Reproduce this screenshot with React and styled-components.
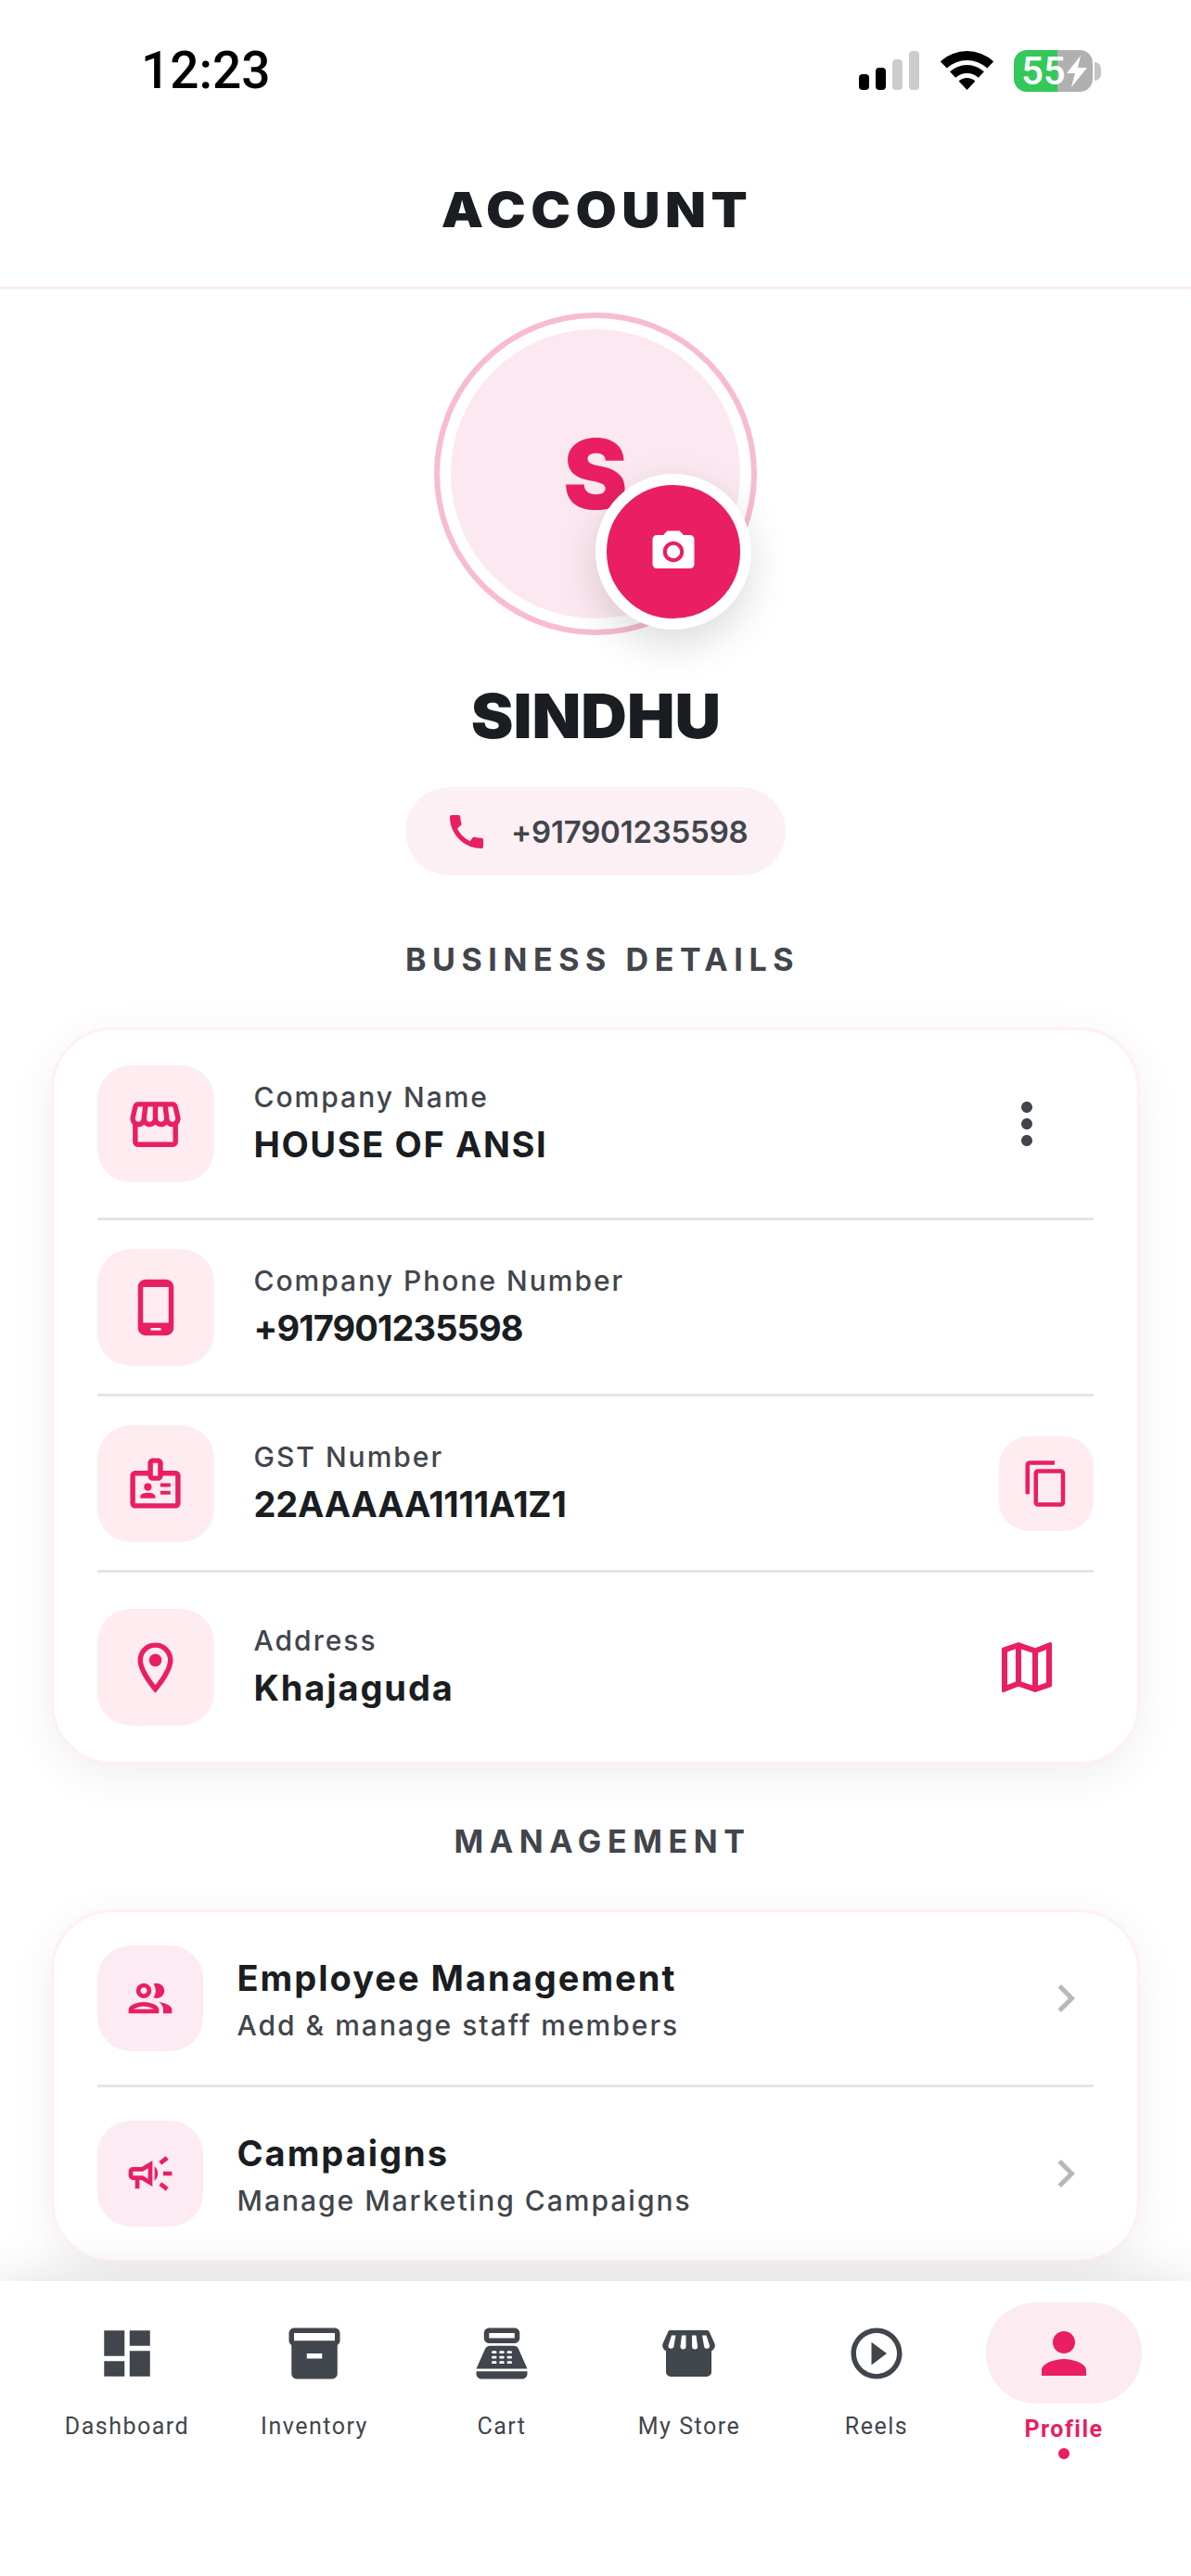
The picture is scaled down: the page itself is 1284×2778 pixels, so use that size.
import React from 'react';
import styled, { createGlobalStyle } from 'styled-components';
import {
    MdCall,
    MdCameraAlt,
    MdChevronRight,
    MdContentCopy,
    MdDashboard,
    MdInventory2,
    MdMoreVert,
    MdOutlineBadge,
    MdOutlineCampaign,
    MdOutlineGroup,
    MdOutlineLocationOn,
    MdOutlineMap,
    MdOutlinePhoneAndroid,
    MdOutlineStorefront,
    MdPerson,
    MdPlayCircleOutline,
    MdPointOfSale,
} from 'react-icons/md';

const PINK = '#e91e63';
const DARK = '#1a1d21';
const GREY = '#41454c';
const HEADING_FONT = 'Inter, "Noto Sans", sans-serif';

const GlobalStyle = createGlobalStyle`
    * {
        box-sizing: border-box;
    }

    body {
        margin: 0;
        background: #fff;
        font-family: ${HEADING_FONT};
    }
`;

const Screen = styled.div`
    width: 1284px;
    height: 2778px;
    display: flex;
    flex-direction: column;
    overflow: hidden;
    background: #fff;
`;

const StatusBar = styled.div`
    height: 152px;
    flex-shrink: 0;
    display: flex;
    align-items: center;
    justify-content: space-between;
    padding: 0 106px 0 152px;
`;

const Time = styled.span`
    font-family: Roboto, sans-serif;
    font-size: 55px;
    font-weight: 500;
    color: #000;
`;

const StatusIcons = styled.div`
    display: flex;
    align-items: center;
    gap: 22px;
`;

const Battery = styled.div`
    display: flex;
    align-items: center;
    position: relative;
    width: 85px;
    height: 45px;
    padding-left: 8px;
    border-radius: 14px;
    background: linear-gradient(90deg, #34c759 55%, #b0b0b0 55%);
    font-family: Roboto, sans-serif;
    font-size: 42px;
    font-weight: 500;
    color: #fff;

    &::after {
        content: '';
        position: absolute;
        right: -9px;
        top: 13px;
        width: 7px;
        height: 20px;
        border-radius: 0 7px 7px 0;
        background: #c4c4c4;
    }

    svg {
        position: absolute;
        right: 4px;
        top: 6px;
    }
`;

const Header = styled.header`
    height: 160px;
    flex-shrink: 0;
    display: flex;
    align-items: center;
    justify-content: center;
    padding-bottom: 8px;
    border-bottom: 3px solid #fdeaf1;
`;

const Title = styled.h1`
    margin: 0 0 0 4px;
    font-size: 52px;
    font-weight: 900;
    letter-spacing: 5px;
    color: ${DARK};
    transform: scaleX(1.1);
`;

const Main = styled.main`
    flex: 1;
    min-height: 0;
    display: flex;
    flex-direction: column;
    align-items: center;
    padding-top: 25px;
`;

const AvatarRing = styled.div`
    position: relative;
    width: 348px;
    height: 348px;
    flex-shrink: 0;
    padding: 12px;
    border: 6px solid #f8bbd0;
    border-radius: 50%;
`;

const AvatarFill = styled.div`
    width: 100%;
    height: 100%;
    display: flex;
    align-items: center;
    justify-content: center;
    border-radius: 50%;
    background: #fce8f0;
    font-size: 104px;
    font-weight: 900;
    color: ${PINK};
`;

const CameraBadge = styled.div`
    position: absolute;
    right: 0;
    bottom: 0;
    width: 168px;
    height: 168px;
    display: flex;
    align-items: center;
    justify-content: center;
    border: 12px solid #fff;
    border-radius: 50%;
    background: ${PINK};
    color: #fff;
    box-shadow: 0 16px 44px rgba(0, 0, 0, 0.14);
`;

const Name = styled.h2`
    margin: 47px 0 0;
    font-size: 66px;
    line-height: 80px;
    font-weight: 900;
    color: ${DARK};
    transform: scaleX(1.04);
`;

const PhonePill = styled.div`
    width: 410px;
    height: 95px;
    margin-top: 37px;
    flex-shrink: 0;
    display: flex;
    align-items: center;
    gap: 24px;
    padding-left: 42px;
    border-radius: 48px;
    background: #fdf0f5;
    color: ${PINK};
`;

const PhoneText = styled.span`
    font-size: 33px;
    font-weight: 600;
    letter-spacing: -0.2px;
    color: ${GREY};
`;

const SectionTitle = styled.h3`
    margin: ${(p) => p.$top}px 0 0 15px;
    font-size: 34px;
    line-height: 44px;
    font-weight: 700;
    letter-spacing: 6.6px;
    color: ${GREY};
`;

const Card = styled.section`
    width: 1174px;
    margin: 51px 1px 0 0;
    flex-shrink: 0;
    padding: 0 47px;
    border: 3px solid #fef0f4;
    border-radius: 66px;
    background: #fff;
    box-shadow: 0 12px 48px rgba(0, 0, 0, 0.065);
`;

const Row = styled.div`
    display: flex;
    align-items: center;
    padding: ${(p) => p.$pad}px 0;
    border-bottom: 3px solid #e5e5e5;

    &:last-child {
        border-bottom: none;
    }
`;

const IconBox = styled.div`
    width: ${(p) => p.$size}px;
    height: ${(p) => p.$size}px;
    flex-shrink: 0;
    display: flex;
    align-items: center;
    justify-content: center;
    border-radius: 36px;
    background: ${(p) => p.$tint};
    color: ${PINK};
`;

const RowText = styled.div`
    flex: 1;
    min-width: 0;
    margin-left: ${(p) => p.$gap}px;
`;

const Label = styled.div`
    font-size: 30px;
    line-height: 44px;
    font-weight: 500;
    letter-spacing: 2px;
    color: ${GREY};
`;

const Value = styled.div`
    font-size: 38px;
    line-height: 58px;
    font-weight: 700;
    letter-spacing: ${(p) => p.$tracking}px;
    color: ${DARK};
`;

const ActionSlot = styled.div`
    width: 144px;
    flex-shrink: 0;
    display: flex;
    align-items: center;
    justify-content: center;
    color: ${(p) => p.$color};
`;

const CopyButton = styled.div`
    width: 102px;
    height: 102px;
    flex-shrink: 0;
    display: flex;
    align-items: center;
    justify-content: center;
    border-radius: 32px;
    background: #feecf0;
    color: ${PINK};
`;

const Chevron = styled.div`
    width: 60px;
    flex-shrink: 0;
    display: flex;
    justify-content: center;
    color: #b8b8b8;
`;

const BottomNav = styled.nav`
    position: relative;
    height: 318px;
    flex-shrink: 0;
    display: grid;
    grid-template-columns: repeat(6, 202px);
    padding: 23px 36px 0;
    background: #fff;
    box-shadow: 0 -8px 48px rgba(0, 0, 0, 0.1);
`;

const NavItem = styled.div`
    display: flex;
    flex-direction: column;
    align-items: center;
    font-family: Roboto, sans-serif;
`;

const NavIcon = styled.div`
    width: 168px;
    height: 109px;
    display: flex;
    align-items: center;
    justify-content: center;
    border-radius: 54px;
    background: ${(p) => (p.$active ? '#fcebf1' : 'transparent')};
    color: ${(p) => (p.$active ? PINK : GREY)};
`;

const NavLabel = styled.span`
    margin-top: ${(p) => (p.$active ? 10 : 7)}px;
    font-size: 25px;
    line-height: 36px;
    font-weight: ${(p) => (p.$active ? 700 : 400)};
    letter-spacing: 1.5px;
    color: ${(p) => (p.$active ? PINK : GREY)};
`;

const NavDot = styled.span`
    width: 12px;
    height: 12px;
    margin-top: 2px;
    border-radius: 50%;
    background: ${PINK};
`;

const SignalIcon = () => (
    <svg width="66" height="42" viewBox="0 0 66 42">
        <rect x="0" y="25" width="11" height="17" rx="4" fill="#000" />
        <rect x="18" y="18" width="11" height="24" rx="4" fill="#000" />
        <rect x="36" y="9" width="11" height="33" rx="4" fill="#ccc" />
        <rect x="54" y="0" width="11" height="42" rx="4" fill="#ccc" />
    </svg>
);

const WifiIcon = () => (
    <svg width="57" height="42" viewBox="0 0 57 42" fill="#000">
        <path d="M-0.1 11.3A42 42 0 0 1 57.1 11.3L50.3 18.6A32 32 0 0 0 6.7 18.6Z" />
        <path d="M10.1 22.3A27 27 0 0 1 46.9 22.3L40.8 28.8A18 18 0 0 0 16.2 28.8Z" />
        <path d="M19.6 32.5A13 13 0 0 1 37.4 32.5L28.5 42Z" />
    </svg>
);

const BoltIcon = () => (
    <svg width="26" height="34" viewBox="0 0 26 34" fill="#fff">
        <path d="M17 0L2 19h9L7 34l17-21h-10z" />
    </svg>
);

const StoreIcon = () => (
    <svg width="66" height="66" viewBox="0 0 66 66">
        <path
            fill={GREY}
            d="M14 8h38a3 3 0 0 1 3 2.3l5.6 12.5c.8 3-.6 6-3.6 7.4V53a5 5 0 0 1-5 5H13a5 5 0 0 1-5-5V30.2c-3-1.4-4.4-4.4-3.6-7.4L10 10.3A3 3 0 0 1 14 8Z"
        />
        <path
            fill="#fff"
            d="M14 13.5h4.5l-2 11.5a3 3 0 0 1-6-.5ZM25 13.5h4.5v12a3 3 0 0 1-6 0ZM36 13.5h4.5l1.6 12a3 3 0 0 1-6 0ZM47 13.5h4.5l3.5 11a3 3 0 0 1-6 .5Z"
        />
    </svg>
);

const businessRows = [
    { icon: <MdOutlineStorefront size={65} />, label: 'Company Name', value: 'HOUSE OF ANSI', tracking: 1.6, pad: 38, action: 'more' },
    { icon: <MdOutlinePhoneAndroid size={66} />, label: 'Company Phone Number', value: '+917901235598', tracking: -0.9, pad: 30.5 },
    { icon: <MdOutlineBadge size={65} />, label: 'GST Number', value: '22AAAAA1111A1Z1', tracking: -0.2, pad: 30.5, action: 'copy' },
    { icon: <MdOutlineLocationOn size={65} />, label: 'Address', value: 'Khajaguda', tracking: 1.9, pad: 39, action: 'map' },
];

const managementRows = [
    { icon: <MdOutlineGroup size={56} />, title: 'Employee Management', subtitle: 'Add & manage staff members' },
    { icon: <MdOutlineCampaign size={56} />, title: 'Campaigns', subtitle: 'Manage Marketing Campaigns' },
];

const navItems = [
    { label: 'Dashboard', icon: <MdDashboard size={66} /> },
    { label: 'Inventory', icon: <MdInventory2 size={66} /> },
    { label: 'Cart', icon: <MdPointOfSale size={66} /> },
    { label: 'My Store', icon: <StoreIcon /> },
    { label: 'Reels', icon: <MdPlayCircleOutline size={66} /> },
    { label: 'Profile', icon: <MdPerson size={72} />, active: true },
];

const renderAction = (action) => {
    if (action === 'more') {
        return (
            <ActionSlot $color={GREY}>
                <MdMoreVert size={72} />
            </ActionSlot>
        );
    }
    if (action === 'copy') {
        return (
            <CopyButton>
                <MdContentCopy size={54} />
            </CopyButton>
        );
    }
    if (action === 'map') {
        return (
            <ActionSlot $color={PINK}>
                <MdOutlineMap size={72} />
            </ActionSlot>
        );
    }
    return null;
};

const App = () => {
    return (
        <Screen>
            <GlobalStyle />
            <StatusBar>
                <Time>12:23</Time>
                <StatusIcons>
                    <SignalIcon />
                    <WifiIcon />
                    <Battery>
                        55
                        <BoltIcon />
                    </Battery>
                </StatusIcons>
            </StatusBar>
            <Header>
                <Title>ACCOUNT</Title>
            </Header>
            <Main>
                <AvatarRing>
                    <AvatarFill>S</AvatarFill>
                    <CameraBadge>
                        <MdCameraAlt size={54} />
                    </CameraBadge>
                </AvatarRing>
                <Name>SINDHU</Name>
                <PhonePill>
                    <MdCall size={48} />
                    <PhoneText>+917901235598</PhoneText>
                </PhonePill>
                <SectionTitle $top={69}>BUSINESS DETAILS</SectionTitle>
                <Card>
                    {businessRows.map((row) => (
                        <Row key={row.label} $pad={row.pad}>
                            <IconBox $size={126} $tint="#feecf0">{row.icon}</IconBox>
                            <RowText $gap={43}>
                                <Label>{row.label}</Label>
                                <Value $tracking={row.tracking}>{row.value}</Value>
                            </RowText>
                            {renderAction(row.action)}
                        </Row>
                    ))}
                </Card>
                <SectionTitle $top={61}>MANAGEMENT</SectionTitle>
                <Card>
                    {managementRows.map((row) => (
                        <Row key={row.title} $pad={36}>
                            <IconBox $size={114} $tint="#fcebf2">{row.icon}</IconBox>
                            <RowText $gap={37}>
                                <Value $tracking={2}>{row.title}</Value>
                                <Label>{row.subtitle}</Label>
                            </RowText>
                            <Chevron>
                                <MdChevronRight size={60} />
                            </Chevron>
                        </Row>
                    ))}
                </Card>
            </Main>
            <BottomNav>
                {navItems.map((item) => (
                    <NavItem key={item.label}>
                        <NavIcon $active={item.active}>{item.icon}</NavIcon>
                        <NavLabel $active={item.active}>{item.label}</NavLabel>
                        {item.active && <NavDot />}
                    </NavItem>
                ))}
            </BottomNav>
        </Screen>
    );
};

export default App;
